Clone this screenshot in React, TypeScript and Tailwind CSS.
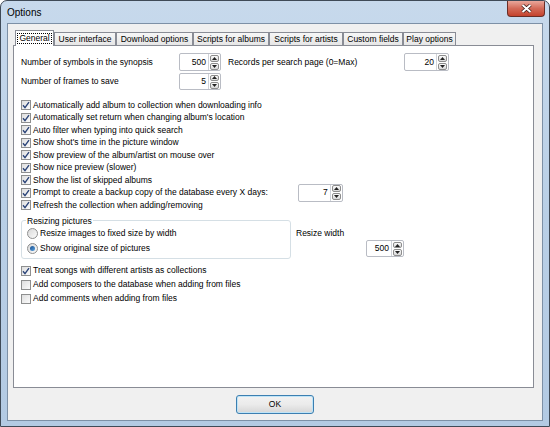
import React from "react";

function Arrow({ up }: { up?: boolean }) {
  return (
    <span className="flex-1 mx-[1px] my-[0.5px] flex items-center justify-center rounded-[2px] border border-[#8d8d8d] bg-gradient-to-b from-[#fbfbfb] to-[#d9d9d9]">
      <svg width="5" height="3" viewBox="0 0 5 3">
        {up ? <path d="M0 3 L2.5 0 L5 3 Z" fill="#222" /> : <path d="M0 0 L2.5 3 L5 0 Z" fill="#222" />}
      </svg>
    </span>
  );
}

function Spin({ value, className }: { value: string; className: string }) {
  return (
    <div className={`flex items-stretch border border-[#b9bcc4] rounded-[2px] bg-white shrink-0 ${className}`}>
      <span className="flex-1 flex items-center justify-end pr-[2px]">{value}</span>
      <span className="w-[12px] flex flex-col border-l border-[#d0d3d9]">
        <Arrow up />
        <Arrow />
      </span>
    </div>
  );
}

function Check({ checked, label, children, tall }: { checked?: boolean; label: string; children?: React.ReactNode; tall?: boolean }) {
  return (
    <div className={`flex items-center ${tall ? "h-[14px]" : "h-[12.5px]"}`}>
      <span className="w-[10px] h-[10px] shrink-0 border border-[#8e8f8f] bg-gradient-to-br from-[#dedede] to-[#fbfbfb] flex items-center justify-center">
        {checked && (
          <svg width="8" height="8" viewBox="0 0 8 8">
            <path d="M1 4.2 L3 6.6 L7 1.2" stroke="#2b4478" strokeWidth="1.4" fill="none" />
          </svg>
        )}
      </span>
      <span className="ml-[2px] whitespace-nowrap">{label}</span>
      {children}
    </div>
  );
}

function Radio({ on, label }: { on?: boolean; label: string }) {
  return (
    <div className="flex items-center h-[15px]">
      <span className="w-[11px] h-[11px] rounded-full border border-[#8e8f8f] bg-gradient-to-br from-[#d8d8d8] to-[#fcfcfc] flex items-center justify-center">
        {on && <span className="w-[5px] h-[5px] rounded-full bg-gradient-to-br from-[#1a4f8f] to-[#5aa3e0]" />}
      </span>
      <span className="ml-[2px] whitespace-nowrap">{label}</span>
    </div>
  );
}

const tabs: [string, string][] = [
  ["User interface", "w-[62px]"],
  ["Download options", "w-[77px]"],
  ["Scripts for albums", "w-[76px]"],
  ["Scripts for artists", "w-[74px]"],
  ["Custom fields", "w-[60px]"],
  ["Play options", "w-[53px]"],
];

export default function App() {
  return (
    <div className="w-[550px] h-[427px] relative overflow-hidden rounded-t-[7px] border border-[#3f4a57] bg-gradient-to-b from-[#c7d9ec] via-[#b9cfe6] to-[#b3cae3] flex flex-col font-['Liberation_Sans',Arial,sans-serif] text-[8.5px] text-black">
      {/* title bar */}
      <div className="h-[22px] flex items-center pl-[6px] text-[10px]">Options</div>
      <div className="absolute right-[4px] top-0 w-[38px] h-[16px] rounded-b-[4px] border border-t-0 border-[#6a2d26] bg-gradient-to-b from-[#e9a79b] via-[#d36a58] to-[#c4412c] flex items-center justify-center">
        <svg width="11" height="9" viewBox="0 0 11 9">
          <path d="M1.5 1 L9.5 8 M9.5 1 L1.5 8" stroke="#3a1a16" strokeWidth="3.4" />
          <path d="M1.5 1 L9.5 8 M9.5 1 L1.5 8" stroke="#fff" strokeWidth="2" />
        </svg>
      </div>

      {/* client area */}
      <div className="mx-[6px] mb-[5px] flex-1 bg-[#f0f0f0] border border-[#7d90a6] flex flex-col">
        <div className="flex items-end pl-[7px] pt-[6px] relative z-10">
          <div className="w-[39px] h-[16px] -mb-[1px] bg-white border border-b-0 border-[#898c95] flex items-start justify-center pt-[2px]">
            <span className="border border-dotted border-black px-[1px] h-[11px] flex items-center">General</span>
          </div>
          {tabs.map(([t, w]) => (
            <div key={t} className={`${w} h-[13px] border border-b-0 border-[#898c95] bg-gradient-to-b from-[#f7f7f7] to-[#e6e6e6] flex items-center justify-center whitespace-nowrap`}>
              {t}
            </div>
          ))}
        </div>

        <div className="ml-[5px] mr-[8px] h-[343px] bg-white border border-[#898c95] pl-[7px]">
          <div className="flex items-center h-[18px] mt-[7px]">
            <span className="w-[158px]">Number of symbols in the synopsis</span>
            <Spin value="500" className="w-[42px] h-[18px]" />
            <span className="w-[176px] ml-[7px]">Records per search page (0=Max)</span>
            <Spin value="20" className="w-[45px] h-[18px]" />
          </div>
          <div className="flex items-center h-[17px] mt-[2px]">
            <span className="w-[158px]">Number of frames to save</span>
            <Spin value="5" className="w-[42px] h-[17px]" />
          </div>

          <div className="mt-[9px]">
            <Check checked label="Automatically add album to collection when downloading info" />
            <Check checked label="Automatically set return when changing album's location" />
            <Check checked label="Auto filter when typing into quick search" />
            <Check checked label="Show shot's time in the picture window" />
            <Check checked label="Show preview of the album/artist on mouse over" />
            <Check checked label="Show nice preview (slower)" />
            <Check checked label="Show the list of skipped albums" />
            <Check checked label="Prompt to create a backup copy of the database every X days:">
              <div className="ml-[30px] -my-[3px]">
                <Spin value="7" className="w-[45px] h-[18px]" />
              </div>
            </Check>
            <Check checked label="Refresh the collection when adding/removing" />
          </div>

          <div className="flex mt-[8px]">
            <div className="relative w-[270px] h-[39px] border border-[#d5dfe5] rounded-[3px] pl-[5px] pt-[5px]">
              <span className="absolute -top-[6px] left-[4px] bg-white px-[1px]">Resizing pictures</span>
              <Radio label="Resize images to fixed size by width" />
              <Radio on label="Show original size of pictures" />
            </div>
            <div className="ml-[5px] pt-[7px]">
              <div>Resize width</div>
              <Spin value="500" className="w-[38px] h-[17px] ml-[70px] mt-[1px]" />
            </div>
          </div>

          <div className="mt-[5px]">
            <Check tall checked label="Treat songs with different artists as collections" />
            <Check tall label="Add composers to the database when adding from files" />
            <Check tall label="Add comments when adding from files" />
          </div>
        </div>

        <div className="flex-1 flex items-center justify-center">
          <button className="w-[78px] h-[19px] rounded-[3px] border border-[#3c7fb1] bg-gradient-to-b from-[#f2f2f2] via-[#ebebeb] to-[#d6d6d6] shadow-[inset_0_0_0_1px_#bfe4f7] text-[8.5px]">
            OK
          </button>
        </div>
      </div>
    </div>
  );
}
